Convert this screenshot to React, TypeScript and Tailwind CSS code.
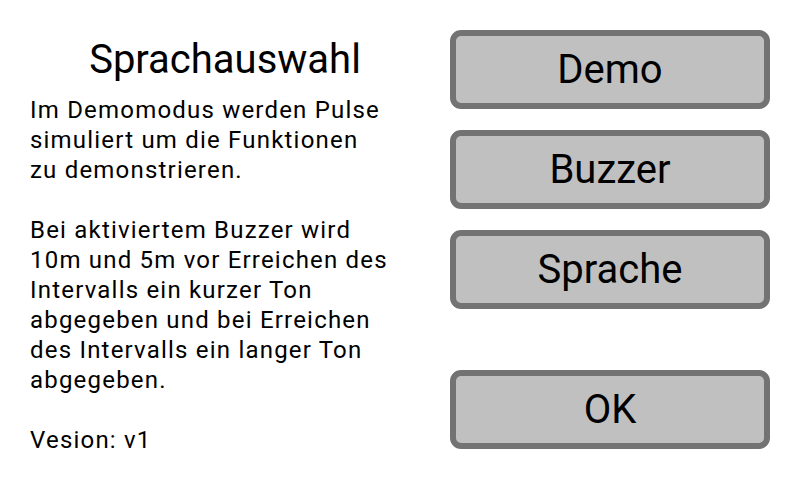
const buttons = ['Demo', 'Buzzer', 'Sprache']

function MenuButton({ label, className = '' }: { label: string; className?: string }) {
  return (
    <button
      className={`flex h-[79px] w-[320px] items-center justify-center rounded-[11px] border-[6px] border-[#737373] bg-[#c0c0c0] text-[40px] text-black ${className}`}
    >
      {label}
    </button>
  )
}

export default function App() {
  return (
    <div
      className="flex h-[480px] w-[800px] bg-white text-black"
      style={{ fontFamily: 'Roboto, "Noto Sans", sans-serif' }}
    >
      <div className="flex w-[450px] flex-col pl-[30px] pt-[35px]">
        <h1 className="pr-[30px] text-center text-[40px] leading-[50px] font-normal">Sprachauswahl</h1>
        <div className="mt-[10px] text-[24px] leading-[30px] tracking-[1.2px]">
          <p>
            Im Demomodus werden Pulse
            <br />
            simuliert um die Funktionen
            <br />
            zu demonstrieren.
          </p>
          <p className="mt-[30px]">
            Bei aktiviertem Buzzer wird
            <br />
            10m und 5m vor Erreichen des
            <br />
            Intervalls ein kurzer Ton
            <br />
            abgegeben und bei Erreichen
            <br />
            des Intervalls ein langer Ton
            <br />
            abgegeben.
          </p>
          <p className="mt-[30px]">Vesion: v1</p>
        </div>
      </div>
      <div className="flex flex-col pt-[30px]">
        <div className="flex flex-col gap-[21px]">
          {buttons.map((b) => (
            <MenuButton key={b} label={b} />
          ))}
        </div>
        <MenuButton label="OK" className="mt-[61px]" />
      </div>
    </div>
  )
}
